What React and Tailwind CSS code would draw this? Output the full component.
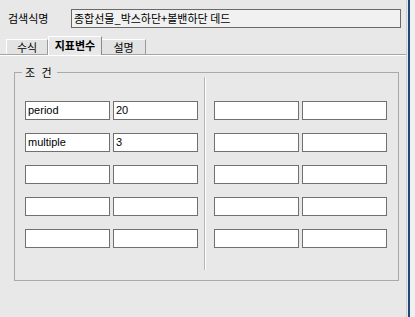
const ROWS = [
  ['period', '20'],
  ['multiple', '3'],
  ['', ''],
  ['', ''],
  ['', ''],
];

function Field({ value }) {
  return (
    <div className="flex h-[19px] w-[85px] items-center border border-[#707070] bg-white pl-[2px] pb-[1px] font-['Liberation_Sans',sans-serif] text-[11px] leading-none text-black">
      {value}
    </div>
  );
}

function Column({ rows }) {
  return (
    <div className="flex flex-col gap-[13px] pt-[22px]">
      {rows.map((r, i) => (
        <div key={i} className="flex gap-[3px]">
          <Field value={r[0]} />
          <Field value={r[1]} />
        </div>
      ))}
    </div>
  );
}

export default function App() {
  const ko = "font-['Noto_Sans_CJK_KR',sans-serif]";
  return (
    <div className="flex h-[317px] w-[415px] overflow-hidden bg-[#e8e8e8] text-black">
      <div className="flex w-[406px] flex-col">
        <div className="flex items-center pt-[9px]">
          <span className={`w-[71px] pl-[8px] text-[11px] leading-none ${ko}`}>검색식명</span>
          <div className={`flex h-[19px] w-[330px] items-center border border-[#6a6a6a] bg-[#f1f1f1] pl-[2px] text-[11px] leading-none ${ko}`}>
            종합선물_박스하단+볼밴하단 데드
          </div>
        </div>

        <div className={`mt-[9px] flex h-[18px] items-end border-b border-[#a5a5a5] pl-[6px] text-[11px] leading-none ${ko}`}>
          <div className="flex h-[15px] w-[42px] items-center justify-center border-t border-l border-r border-t-white border-l-white border-r-[#9a9a9a] bg-[#e3e3e3]">
            수식
          </div>
          <div className="-mb-px flex h-[19px] w-[54px] items-center justify-center border-t border-l border-r border-t-white border-l-white border-r-[#8a8a8a] bg-[#e8e8e8] pb-[2px] font-bold">
            지표변수
          </div>
          <div className="flex h-[15px] w-[44px] items-center justify-center border-t border-r border-t-white border-r-[#9a9a9a] bg-[#e3e3e3]">
            설명
          </div>
        </div>
        <div className="h-px w-full bg-white" />

        <fieldset className="ml-[14px] mt-[9px] w-[384px] border border-[#a9a9a9] pb-[10px] pl-[10px] pr-[11px]">
          <legend className={`-ml-[3px] px-[3px] text-[11px] leading-[14px] tracking-[2px] ${ko}`}>조 건</legend>
          <div className="flex">
            <Column rows={ROWS} />
            <div className="-mt-[2px] ml-[6px] mr-[8px] h-[193px] w-[2px] border-l border-r border-l-[#b4b4b4] border-r-white" />
            <Column rows={ROWS.map(() => ['', ''])} />
          </div>
        </fieldset>
      </div>
      <div className="h-full w-px bg-[#cfcfcf]" />
      <div className="h-full w-px" />
      <div className="h-full w-[2px] bg-[#1f4a78]" />
      <div className="h-full flex-1 bg-[#f0f0f0]" />
    </div>
  );
}
